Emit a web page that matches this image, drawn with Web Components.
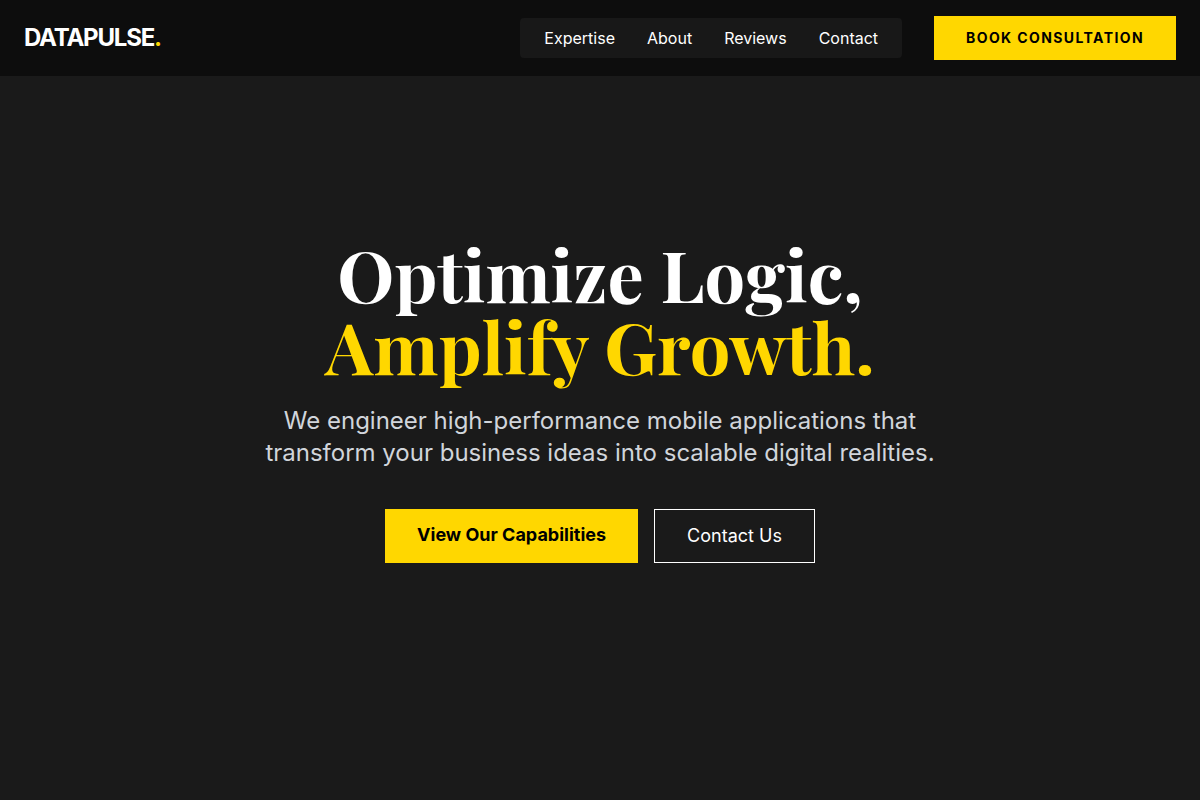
<!DOCTYPE html>
<html lang="en">
<head>
  <meta charset="UTF-8">
  <meta name="viewport" content="width=device-width, initial-scale=1.0">
  <title>DataPulse</title>
  <style>
    :root {
      --gold: #ffd700;
      --ink: #0d0d0d;
      --charcoal: #1a1a1a;
    }

    body {
      margin: 0;
      background-color: var(--charcoal);
      color: #fff;
      font-family: Inter, "Liberation Sans", sans-serif;
      font-size: 16px;
      line-height: 24px;
    }
  </style>
</head>
<body>
  <app-bar>
    <nav-link href="#expertise">Expertise</nav-link>
    <nav-link href="#about">About</nav-link>
    <nav-link href="#reviews">Reviews</nav-link>
    <nav-link href="#contact">Contact</nav-link>
    <button-link slot="action" variant="small" href="#book">Book Consultation</button-link>
  </app-bar>

  <main>
    <hero-section>
      <span slot="title">Optimize Logic,</span>
      <span slot="highlight">Amplify Growth.</span>
      <span slot="subtitle">We engineer high-performance mobile applications that transform your business ideas into scalable digital realities.</span>
      <button-link variant="primary" href="#expertise">View Our Capabilities</button-link>
      <button-link variant="outline" href="#contact">Contact Us</button-link>
    </hero-section>
  </main>

  <script>
    class AppBar extends HTMLElement {
      constructor() {
        super();
        this.shadowDOM = this.attachShadow({ mode: "open" });
      }

      connectedCallback() {
        this.render();
      }

      render() {
        this.shadowDOM.innerHTML = `
          <style>
            :host {
              display: block;
              position: fixed;
              top: 0;
              left: 0;
              right: 0;
              z-index: 10;
              background-color: var(--ink);
            }

            header {
              display: flex;
              align-items: center;
              justify-content: space-between;
              padding: 16px 24px;
            }

            .logo {
              color: #fff;
              font-size: 24px;
              font-weight: 700;
              line-height: 32px;
              letter-spacing: -0.05em;
              text-decoration: none;
            }

            .logo > span {
              color: var(--gold);
            }

            .menu {
              display: flex;
              align-items: center;
              gap: 32px;
            }

            nav {
              display: flex;
              gap: 32px;
              padding: 8px 24px;
              border-radius: 4px;
              background-color: #181818;
            }

            @media screen and (max-width: 860px) {
              nav {
                display: none;
              }
            }
          </style>
          <header>
            <a class="logo" href="#">DATAPULSE<span>.</span></a>
            <div class="menu">
              <nav><slot></slot></nav>
              <slot name="action"></slot>
            </div>
          </header>`;
      }
    }

    class NavLink extends HTMLElement {
      constructor() {
        super();
        this.shadowDOM = this.attachShadow({ mode: "open" });
      }

      connectedCallback() {
        this.render();
      }

      render() {
        this.shadowDOM.innerHTML = `
          <style>
            :host {
              display: block;
            }

            a {
              color: #fff;
              text-decoration: none;
            }

            a:hover {
              color: var(--gold);
            }
          </style>
          <a href="${this.getAttribute("href")}"><slot></slot></a>`;
      }
    }

    class ButtonLink extends HTMLElement {
      constructor() {
        super();
        this.shadowDOM = this.attachShadow({ mode: "open" });
      }

      connectedCallback() {
        this.render();
      }

      render() {
        this.shadowDOM.innerHTML = `
          <style>
            :host {
              display: flex;
            }

            a {
              flex: 1;
              padding: 12px 32px;
              font-size: 18px;
              line-height: 28px;
              text-align: center;
              text-decoration: none;
            }

            .primary,
            .small {
              background-color: var(--gold);
              color: #000;
              font-weight: 700;
            }

            .small {
              font-size: 14px;
              line-height: 20px;
              letter-spacing: 0.1em;
              text-transform: uppercase;
            }

            .outline {
              border: 1px solid #fff;
              color: #fff;
            }
          </style>
          <a class="${this.getAttribute("variant")}" href="${this.getAttribute("href")}"><slot></slot></a>`;
      }
    }

    class HeroSection extends HTMLElement {
      constructor() {
        super();
        this.shadowDOM = this.attachShadow({ mode: "open" });
      }

      connectedCallback() {
        this.render();
      }

      render() {
        this.shadowDOM.innerHTML = `
          <style>
            * {
              margin: 0;
              box-sizing: border-box;
            }

            :host {
              display: flex;
              align-items: center;
              justify-content: center;
              min-height: 100vh;
              text-align: center;
            }

            .content {
              padding: 0 24px;
            }

            h1 {
              margin-bottom: 24px;
              font-family: "Playfair Display", "Liberation Serif", serif;
              font-size: 72px;
              font-weight: 700;
              line-height: 72px;
            }

            h1 > span {
              display: block;
            }

            .highlight {
              color: var(--gold);
            }

            p {
              max-width: 672px;
              margin: 0 auto 40px;
              color: #d1d5db;
              font-size: 24px;
              line-height: 32px;
            }

            .actions {
              display: flex;
              flex-wrap: wrap;
              justify-content: center;
              gap: 16px;
            }
          </style>
          <div class="content">
            <h1>
              <span><slot name="title"></slot></span>
              <span class="highlight"><slot name="highlight"></slot></span>
            </h1>
            <p><slot name="subtitle"></slot></p>
            <div class="actions"><slot></slot></div>
          </div>`;
      }
    }

    customElements.define("app-bar", AppBar);
    customElements.define("nav-link", NavLink);
    customElements.define("button-link", ButtonLink);
    customElements.define("hero-section", HeroSection);
  </script>
</body>
</html>
